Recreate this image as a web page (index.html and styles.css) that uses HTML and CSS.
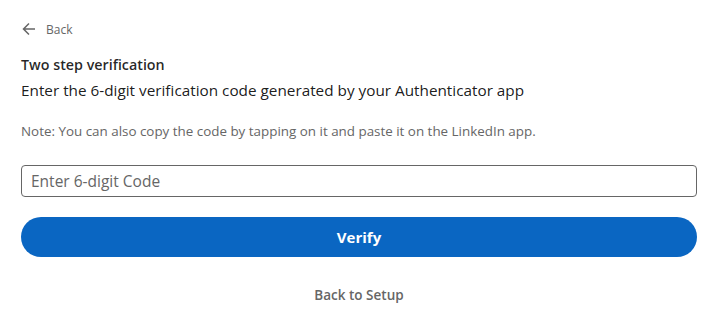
FILE: index.html
```html
<!DOCTYPE html>
<html lang="en">
<head>
    <meta charset="UTF-8">
    <meta name="viewport" content="width=device-width, initial-scale=1.0">
    <title>Two step verification</title>
    <link rel="stylesheet" href="styles.css">
</head>
<body>
    <div class="container">
        <a class="back-link" href="#">
            <svg width="16" height="16" viewBox="0 0 16 16" aria-hidden="true">
                <path d="M14 7.25H4.3l4.2-4.2-1.06-1.06L1.44 8l6 6.01 1.06-1.06-4.2-4.2H14z" fill="#666666"/>
            </svg>
            <span>Back</span>
        </a>

        <h1>Two step verification</h1>
        <p class="subtitle">Enter the 6-digit verification code generated by your Authenticator app</p>

        <p class="note">Note: You can also copy the code by tapping on it and paste it on the LinkedIn app.</p>

        <input type="text" class="code-input" placeholder="Enter 6-digit Code">

        <button class="verify-btn">Verify</button>

        <div class="setup-link">
            <a href="#">Back to Setup</a>
        </div>
    </div>
</body>
</html>
```

FILE: styles.css
```css
body {
    margin: 0;
    background-color: white;
    font-family: "Open Sans", "Noto Sans", Arial, sans-serif;
    color: rgba(0,0,0,0.9);
}
.container {
    padding: 20px 18px 0 21px;
}
.back-link {
    display: flex;
    align-items: center;
    gap: 9px;
    color: #666666;
    text-decoration: none;
    font-size: 12px;
    font-weight: 500;
    height: 18px;
}
h1 {
    font-size: 14.3px;
    font-weight: 600;
    margin: 17px 0 0 0;
    line-height: 20px;
    color: rgba(0,0,0,0.85);
}
.subtitle {
    font-size: 15.3px;
    margin: 4px 0 0 0;
    line-height: 22px;
}
.note {
    font-size: 13.4px;
    color: #666666;
    margin: 21px 0 0 0;
    line-height: 18px;
}
.code-input {
    display: block;
    box-sizing: border-box;
    width: 100%;
    height: 32px;
    margin-top: 25px;
    padding: 0 9px;
    border: 1px solid #666666;
    border-radius: 4px;
    font-family: inherit;
    font-size: 15.5px;
    color: rgba(0,0,0,0.9);
}
.code-input::placeholder {
    color: #666666;
}
.verify-btn {
    display: block;
    width: 100%;
    height: 40px;
    margin-top: 20px;
    border: none;
    border-radius: 20px;
    background-color: #0a66c2;
    color: white;
    font-family: inherit;
    font-size: 15px;
    font-weight: 700;
    cursor: pointer;
}
.setup-link {
    text-align: center;
    margin-top: 26px;
}
.setup-link a {
    color: #666666;
    text-decoration: none;
    font-size: 13.5px;
    font-weight: 600;
}
```
